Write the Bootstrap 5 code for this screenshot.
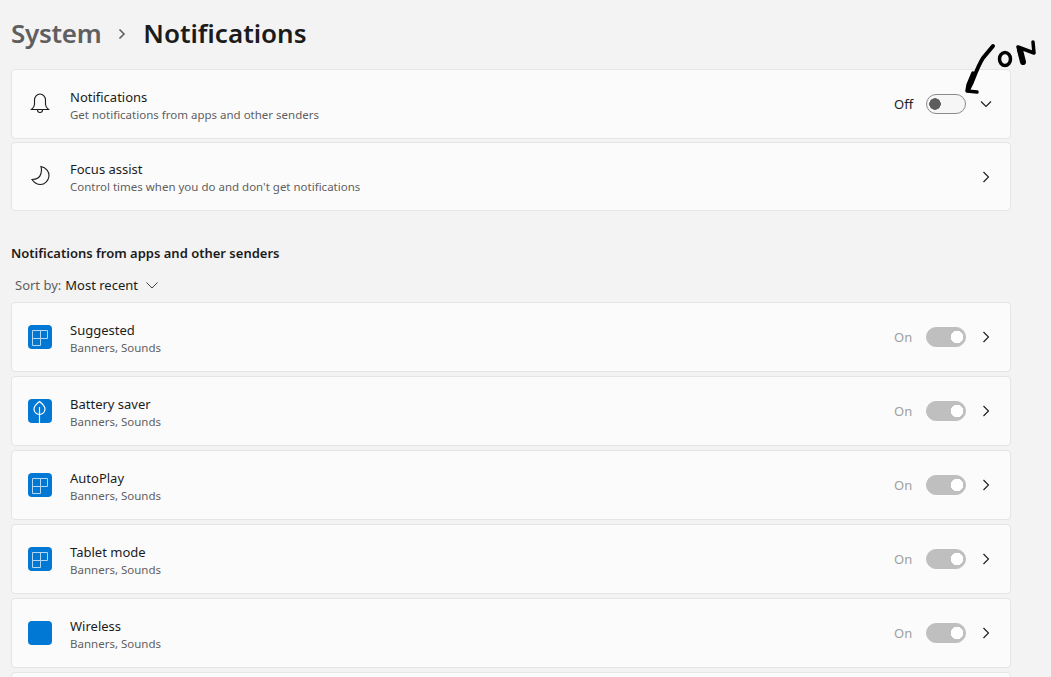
<!DOCTYPE html>
<html lang="en">
<head>
    <meta charset="UTF-8">
    <title>Notifications</title>
    <meta name="viewport" content="width=device-width, initial-scale=1.0"/>
    <link href="https://cdn.jsdelivr.net/npm/bootstrap@5.3.0/dist/css/bootstrap.min.css" rel="stylesheet">
    <script src="https://cdn.jsdelivr.net/npm/bootstrap@5.3.3/dist/js/bootstrap.bundle.min.js"></script>
    <style>
        html, body {
            height: 677px;
            overflow: hidden;
        }
        body {
            background: #f3f3f3;
            color: #1b1b1b;
            font-family: "Noto Sans", "Open Sans", sans-serif;
            font-size: 13px;
            position: relative;
        }
        .page-wrap {
            width: 1011px;
            padding: 15px 0 0 11px;
        }
        .crumb {
            height: 37px;
            margin-bottom: 17px;
            font-size: 26px;
            font-weight: 600;
            line-height: 37px;
        }
        .crumb-parent {
            color: #5f5f5f;
            letter-spacing: -.3px;
        }
        .crumb-sep {
            margin: 0 17px 0 17px;
        }
        .set-card {
            height: 70px;
            padding: 2px 18px 0 16px;
            background: #fbfbfb;
            border: 1px solid #e5e5e5;
            border-radius: 4px;
        }
        .set-card-short {
            height: 69px;
            margin-top: 3px;
        }
        .set-icon {
            width: 24px;
            height: 24px;
            margin: -2px 18px 0 0;
            flex: none;
        }
        .app-tile {
            background: #0078d4;
            border-radius: 4px;
        }
        .set-title {
            line-height: 18px;
        }
        .set-sub {
            color: #5f5f5f;
            font-size: 11.5px;
            line-height: 17px;
        }
        .state-label {
            width: 32px;
        }
        .state-label-muted {
            color: #a0a0a0;
        }
        .form-switch .toggle-sw {
            width: 40px;
            height: 20px;
            margin: -2px 14px 0 0;
            border: 1px solid #8a8a8a;
            border-radius: 10px;
            background-color: #f6f6f6;
            background-image: radial-gradient(circle at 8px 9px, #5d5d5d 5.5px, transparent 6px);
            background-position: 0 0;
            background-size: auto;
            opacity: 1;
            float: none;
        }
        .form-switch .toggle-sw:checked {
            border-color: #bfbfbf;
            background-color: #bfbfbf;
            background-image: radial-gradient(circle at 30px 9px, #fff 6px, transparent 6.5px);
        }
        .row-chevron {
            margin-top: -2px;
        }
        .section-head {
            margin: 33px 0 0;
            font-size: 13px;
            font-weight: 600;
            line-height: 18px;
        }
        .sort-row {
            height: 20px;
            margin: 13px 0 7px 4px;
            line-height: 20px;
        }
        .sort-key {
            color: #5f5f5f;
        }
        .scribble {
            position: absolute;
            left: 950px;
            top: 30px;
        }
    </style>
</head>
<body>

<div class="page-wrap">
    <div class="crumb d-flex align-items-center">
        <span class="crumb-parent">System</span>
        <svg class="crumb-sep" width="8" height="12" viewBox="0 0 8 12" fill="none" stroke="#5f5f5f" stroke-width="1.6"><path d="M1.500 1.500 6 6l-4.500 4.500"/></svg>
        <span>Notifications</span>
    </div>

    <div class="d-flex flex-column">
        <div class="set-card d-flex align-items-center">
            <svg class="set-icon" viewBox="0 0 24 24" fill="none" stroke="#1b1b1b" stroke-width="1.1"><path d="M3.500 17.500c1.500-1.400 3-3 3-5V8a5.500 6 0 0 1 11 0v4.500c0 2 1.500 3.600 3 5z"/><path d="M9.500 18a2.500 2.500 0 0 0 5 0"/></svg>
            <div class="flex-grow-1">
                <div class="set-title">Notifications</div>
                <div class="set-sub">Get notifications from apps and other senders</div>
            </div>
            <span class="state-label">Off</span>
            <div class="form-check form-switch m-0 p-0 d-flex align-items-center"><input class="form-check-input toggle-sw" type="checkbox" role="switch" disabled></div>
            <svg class="row-chevron" width="12" height="12" viewBox="0 0 12 12" fill="none" stroke="#1b1b1b" stroke-width="1.1"><path d="M1 3.500 6 8.500l5-5"/></svg>
        </div>
        <div class="set-card set-card-short d-flex align-items-center">
            <svg class="set-icon" viewBox="0 0 24 24" fill="none" stroke="#1b1b1b" stroke-width="1.1"><path d="M13 1.500c5 1 8.500 5.500 8 9.500-.5 5-4.500 8.500-8.500 8.500-3.500 0-6.500-2-8.500-5 5 0 8-2.500 9-6 .7-3 .5-5.500 0-7z"/></svg>
            <div class="flex-grow-1">
                <div class="set-title">Focus assist</div>
                <div class="set-sub">Control times when you do and don't get notifications</div>
            </div>
            <svg class="row-chevron" width="12" height="12" viewBox="0 0 12 12" fill="none" stroke="#1b1b1b" stroke-width="1.1"><path d="M3.500 1 8.500 6l-5 5"/></svg>
        </div>
    </div>

    <div class="section-head">Notifications from apps and other senders</div>
    <div class="sort-row d-flex align-items-center">
        <span class="sort-key me-1">Sort by:</span>
        <span>Most recent</span>
        <svg class="ms-2" width="12" height="12" viewBox="0 0 12 12" fill="none" stroke="#404040" stroke-width="1"><path d="M.5 3.500 6 9l5.500-5.500"/></svg>
    </div>

    <div class="d-flex flex-column gap-1">
        <div class="set-card d-flex align-items-center">
            <svg class="set-icon app-tile" viewBox="0 0 24 24" fill="none" stroke="#b5d7f1"><path d="M4.500 5.500h15v8h-7v7h-8zM12.500 5.500v8M4.500 13.500h8"/></svg>
            <div class="flex-grow-1">
                <div class="set-title">Suggested</div>
                <div class="set-sub">Banners, Sounds</div>
            </div>
            <span class="state-label state-label-muted">On</span>
            <div class="form-check form-switch m-0 p-0 d-flex align-items-center"><input class="form-check-input toggle-sw" type="checkbox" role="switch" checked disabled></div>
            <svg class="row-chevron" width="12" height="12" viewBox="0 0 12 12" fill="none" stroke="#1b1b1b" stroke-width="1.1"><path d="M3.500 1 8.500 6l-5 5"/></svg>
        </div>
        <div class="set-card d-flex align-items-center">
            <svg class="set-icon app-tile" viewBox="0 0 24 24" fill="none" stroke="#fff" stroke-width="1.2"><path d="M11.500 2.500c3 2.300 5.500 4.500 5.500 7.500a5.500 5.500 0 0 1-11 0c0-3 2.500-5.200 5.500-7.500zM11.500 8v16"/></svg>
            <div class="flex-grow-1">
                <div class="set-title">Battery saver</div>
                <div class="set-sub">Banners, Sounds</div>
            </div>
            <span class="state-label state-label-muted">On</span>
            <div class="form-check form-switch m-0 p-0 d-flex align-items-center"><input class="form-check-input toggle-sw" type="checkbox" role="switch" checked disabled></div>
            <svg class="row-chevron" width="12" height="12" viewBox="0 0 12 12" fill="none" stroke="#1b1b1b" stroke-width="1.1"><path d="M3.500 1 8.500 6l-5 5"/></svg>
        </div>
        <div class="set-card d-flex align-items-center">
            <svg class="set-icon app-tile" viewBox="0 0 24 24" fill="none" stroke="#b5d7f1"><path d="M4.500 5.500h15v8h-7v7h-8zM12.500 5.500v8M4.500 13.500h8"/></svg>
            <div class="flex-grow-1">
                <div class="set-title">AutoPlay</div>
                <div class="set-sub">Banners, Sounds</div>
            </div>
            <span class="state-label state-label-muted">On</span>
            <div class="form-check form-switch m-0 p-0 d-flex align-items-center"><input class="form-check-input toggle-sw" type="checkbox" role="switch" checked disabled></div>
            <svg class="row-chevron" width="12" height="12" viewBox="0 0 12 12" fill="none" stroke="#1b1b1b" stroke-width="1.1"><path d="M3.500 1 8.500 6l-5 5"/></svg>
        </div>
        <div class="set-card d-flex align-items-center">
            <svg class="set-icon app-tile" viewBox="0 0 24 24" fill="none" stroke="#b5d7f1"><path d="M4.500 5.500h15v8h-7v7h-8zM12.500 5.500v8M4.500 13.500h8"/></svg>
            <div class="flex-grow-1">
                <div class="set-title">Tablet mode</div>
                <div class="set-sub">Banners, Sounds</div>
            </div>
            <span class="state-label state-label-muted">On</span>
            <div class="form-check form-switch m-0 p-0 d-flex align-items-center"><input class="form-check-input toggle-sw" type="checkbox" role="switch" checked disabled></div>
            <svg class="row-chevron" width="12" height="12" viewBox="0 0 12 12" fill="none" stroke="#1b1b1b" stroke-width="1.1"><path d="M3.500 1 8.500 6l-5 5"/></svg>
        </div>
        <div class="set-card d-flex align-items-center">
            <div class="set-icon app-tile"></div>
            <div class="flex-grow-1">
                <div class="set-title">Wireless</div>
                <div class="set-sub">Banners, Sounds</div>
            </div>
            <span class="state-label state-label-muted">On</span>
            <div class="form-check form-switch m-0 p-0 d-flex align-items-center"><input class="form-check-input toggle-sw" type="checkbox" role="switch" checked disabled></div>
            <svg class="row-chevron" width="12" height="12" viewBox="0 0 12 12" fill="none" stroke="#1b1b1b" stroke-width="1.1"><path d="M3.500 1 8.500 6l-5 5"/></svg>
        </div>
        <div class="set-card"></div>
    </div>
</div>

<!-- hand drawn note over the toggle -->
<svg class="scribble" width="101" height="70" viewBox="950 30 101 70" fill="none" stroke="#000" stroke-width="4" stroke-linecap="round" stroke-linejoin="round">
    <path d="M993 46 983 58C979 64 976 72 972 82L968 90"/>
    <path d="M973 73 968 85 967 91 977 92" stroke-width="3.500"/>
    <ellipse cx="1005" cy="59" rx="5.500" ry="6.500" stroke-width="3.500"/>
    <path d="M1023 63 1018 47 1034 53 1033 42" stroke-width="3.500"/>
    <path d="M1023 62 1020 50" stroke-width="6"/>
</svg>

</body>
</html>
